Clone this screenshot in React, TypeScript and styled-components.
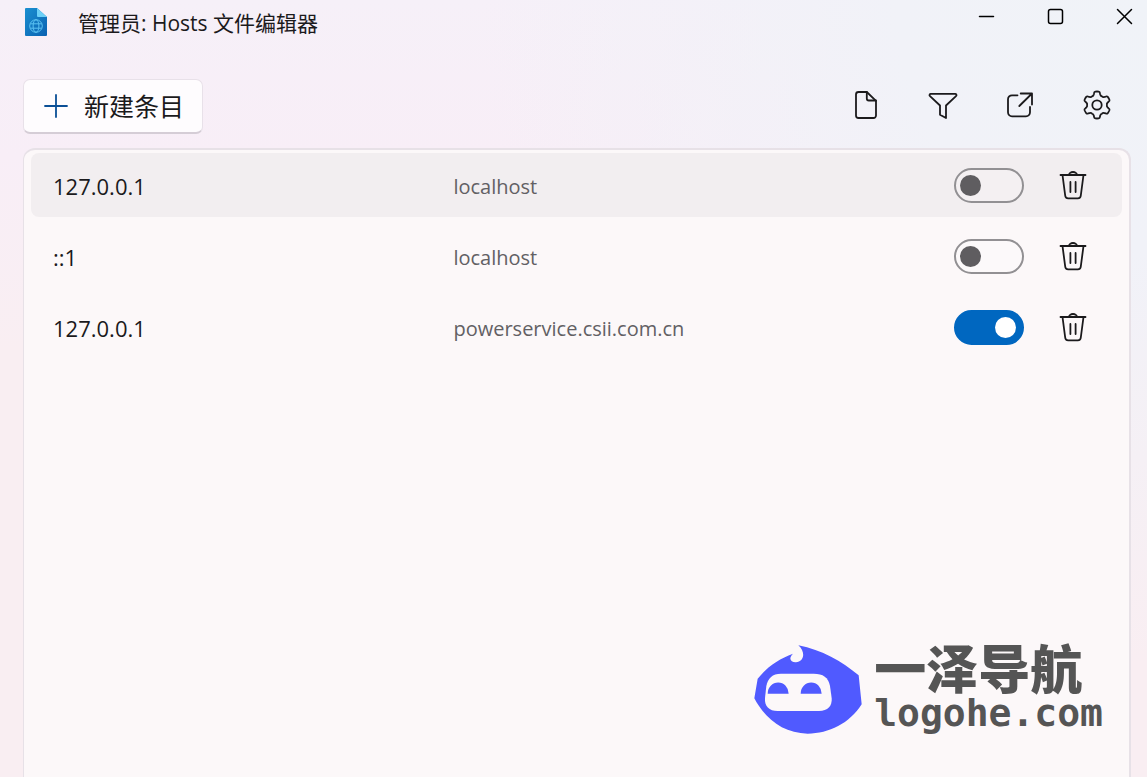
import React, { useState } from "react";
import styled, { createGlobalStyle } from "styled-components";

const GlobalStyle = createGlobalStyle`
  *, *::before, *::after { box-sizing: border-box; }
  body {
    margin: 0;
    font-family: "Open Sans", "Noto Sans CJK SC", sans-serif;
    color: #1b1a1c;
  }
  button, input { font: inherit; color: inherit; }
`;

const Window = styled.div`
  min-height: 100vh;
  display: flex;
  flex-direction: column;
  background:
    radial-gradient(circle at 100% 0%, #f0f3f8 0%, #f1f2f8 18%, rgba(241, 242, 248, 0) 48%),
    linear-gradient(180deg, #f6f0f8 0%, #f8eef7 20%, #f9eef2 45%, #f9eef2 100%);
`;

const TitleBar = styled.header`
  display: flex;
  align-items: flex-start;
  height: 46px;
  padding-left: 25px;
`;

const TitleGroup = styled.div`
  flex: 1;
  min-width: 0;
  display: flex;
  gap: 31px;
  padding-top: 8px;
`;

const Title = styled.h1`
  margin: 0;
  font-size: 21px;
  font-weight: 400;
  line-height: 30px;
  white-space: nowrap;
`;

const WindowControls = styled.div`
  display: flex;
  gap: 23px;
`;

const IconButton = styled.button<{ $width: number; $height: number }>`
  width: ${(p) => p.$width}px;
  height: ${(p) => p.$height}px;
  padding: 0;
  border: 0;
  border-radius: 6px;
  background: transparent;
  display: flex;
  align-items: center;
  justify-content: center;
  &:hover { background: rgba(0, 0, 0, 0.05); }
`;

const Toolbar = styled.div`
  display: flex;
  justify-content: space-between;
  align-items: flex-start;
  padding: 33px 20px 14px 23px;
`;

const NewEntryButton = styled.button`
  display: flex;
  align-items: center;
  gap: 16px;
  height: 55px;
  padding: 0 18px 0 20px;
  border: 1px solid #e8e1e9;
  border-bottom: 2px solid #d5cdd6;
  border-radius: 7px;
  background: #fefcfe;
  font-size: 25px;
  line-height: 36px;
  white-space: nowrap;
`;

const ToolbarActions = styled.div`
  display: flex;
  gap: 17px;
`;

const Panel = styled.main`
  flex: 1;
  display: flex;
  flex-direction: column;
  justify-content: space-between;
  margin: 0 16px 0 23px;
  padding: 3px 7px 40px;
  border: 2px solid #e7e1e7;
  border-width: 2px 2px 0 1px;
  border-radius: 12px 12px 0 0;
  background: #fcf8f9;
`;

const EntryList = styled.ul`
  list-style: none;
  margin: 0;
  padding: 0;
  display: flex;
  flex-direction: column;
  gap: 7px;
`;

const EntryRow = styled.li<{ $selected: boolean }>`
  display: grid;
  grid-template-columns: minmax(0, 4fr) minmax(0, 5fr) auto auto;
  align-items: center;
  height: 64px;
  padding: 0 22px;
  border-radius: 8px;
  background: ${(p) => (p.$selected ? "#f2eef0" : "transparent")};
`;

const Address = styled.span`
  padding-top: 2px;
  font-size: 22px;
  line-height: 32px;
`;

const Host = styled.span`
  padding-top: 4px;
  font-size: 20px;
  line-height: 32px;
  color: #626064;
`;

const Toggle = styled.input`
  appearance: none;
  display: flex;
  align-items: center;
  width: 70px;
  height: 35px;
  margin: 0 22px 0 0;
  padding: 0 6px 0 4px;
  border: 2px solid #929093;
  border-radius: 18px;
  background: rgba(255, 255, 255, 0.15);
  &::before {
    content: "";
    width: 21px;
    height: 21px;
    border-radius: 50%;
    background: #5f5d60;
  }
  &:checked {
    justify-content: flex-end;
    border-color: #0067c0;
    background: #0067c0;
  }
  &:checked::before { background: #fff; }
`;

const Brand = styled.a`
  align-self: flex-end;
  display: flex;
  align-items: flex-start;
  gap: 12px;
  margin-right: 19px;
  color: #555;
  text-decoration: none;
`;

const BrandText = styled.span`
  display: flex;
  flex-direction: column;
`;

const BrandName = styled.span`
  font-family: "Noto Sans CJK SC", sans-serif;
  font-size: 52px;
  font-weight: 900;
  line-height: 44px;
`;

const BrandDomain = styled.span`
  font-family: "DejaVu Sans Mono", monospace;
  font-size: 38px;
  font-weight: 700;
  line-height: 48px;
`;

type LineIconProps = { size?: number; color?: string; width?: number; children: React.ReactNode };

const LineIcon = ({ size = 32, color = "#1b1a1c", width = 1.8, children }: LineIconProps) => (
  <svg
    width={size}
    height={size}
    viewBox={`0 0 ${size} ${size}`}
    fill="none"
    stroke={color}
    strokeWidth={width}
    strokeLinecap="round"
    strokeLinejoin="round"
    aria-hidden="true"
  >
    {children}
  </svg>
);

const polar = (r: number, deg: number) => {
  const a = ((deg - 90) * Math.PI) / 180;
  return `${(16 + r * Math.cos(a)).toFixed(2)} ${(16 + r * Math.sin(a)).toFixed(2)}`;
};

// Six rounded teeth, joined by shallow curved valleys.
const gearPath =
  [0, 60, 120, 180, 240, 300]
    .map((a, i) => {
      const start = i === 0 ? `M${polar(12.2, a - 14)}` : "";
      return (
        `${start}Q${polar(13.5, a - 12)} ${polar(13.5, a - 7)}` +
        `Q${polar(13.6, a)} ${polar(13.5, a + 7)}` +
        `Q${polar(13.5, a + 12)} ${polar(12.2, a + 14)}` +
        `L${polar(11, a + 17)}Q${polar(9.6, a + 22)} ${polar(9.9, a + 30)}` +
        `Q${polar(9.6, a + 38)} ${polar(11, a + 43)}L${polar(12.2, a + 46)}`
      );
    })
    .join("") + "Z";

const AppIcon = () => (
  <svg width="22" height="28" viewBox="0 0 22 28" aria-hidden="true">
    <defs>
      <linearGradient id="sheet" x1="0" y1="0" x2="1" y2="1">
        <stop offset="0" stopColor="#1a8fd0" />
        <stop offset="1" stopColor="#0a62b2" />
      </linearGradient>
    </defs>
    <path d="M1 0h11l10 9v18a1 1 0 0 1-1 1H1a1 1 0 0 1-1-1V1a1 1 0 0 1 1-1z" fill="url(#sheet)" />
    <path d="M12 0l10 9h-9a1 1 0 0 1-1-1z" fill="#6cd0f7" />
    <g fill="none" stroke="#5cc3f2" strokeWidth="1">
      <circle cx="11" cy="18" r="6.3" />
      <ellipse cx="11" cy="18" rx="2.9" ry="6.3" />
      <path d="M5.3 15.8h11.4M5.3 20.2h11.4" />
    </g>
  </svg>
);

const BrandMark = () => (
  <svg width="108" height="89" viewBox="31 27 324 267" aria-hidden="true">
    <path
      d="M164 28C235 42 294 76 345 118L354 205C318 262 256 293 192 293C120 291 66 251 32 187L42 128C71 92 106 68 148 53C132 69 143 80 157 79C180 77 188 50 164 28Z"
      fill="#505aff"
    />
    <path
      d="M112 113H210C238 113 254 124 259 150L264 186C266 210 252 225 226 225H102C76 225 62 211 64 186L68 150C73 126 86 113 112 113Z"
      fill="#fcf8f9"
    />
    <path d="M72 173a31 33 0 0 1 63 0zM171 173a31 33 0 0 1 63 0z" fill="#505aff" />
  </svg>
);

const entries = [
  { id: 1, address: "127.0.0.1", host: "localhost", active: false },
  { id: 2, address: "::1", host: "localhost", active: false },
  { id: 3, address: "127.0.0.1", host: "powerservice.csii.com.cn", active: true },
];

const toolbarActions = [
  {
    label: "其他行",
    icon: (
      <>
        <path d="M8.5 3h8.3L26 11.8v14.7a2.5 2.5 0 0 1-2.5 2.5h-15A2.5 2.5 0 0 1 6 26.5v-21A2.5 2.5 0 0 1 8.5 3z" />
        <path d="M16.8 3v6.5a2 2 0 0 0 2 2H26" />
      </>
    ),
  },
  {
    label: "筛选器",
    icon: <path d="M4 4.8h24a1.3 1.3 0 0 1 1 2.3L19 16.5V29l-6-3.3V16.5L3 7.1a1.3 1.3 0 0 1 1-2.3z" />,
  },
  {
    label: "打开 hosts 文件",
    icon: (
      <>
        <path d="M13.5 6.3H8A4 4 0 0 0 4 10.3V23.3A4 4 0 0 0 8 27.3H22A4 4 0 0 0 26 23.3V18" />
        <path d="M16.7 4.5H28V15.5M28 4.5L15.3 17" />
      </>
    ),
  },
  {
    label: "设置",
    icon: (
      <>
        <path d={gearPath} />
        <circle cx="16" cy="16" r="4.7" />
      </>
    ),
  },
];

const windowActions = [
  { label: "最小化", icon: <path d="M1.5 8.5h14" /> },
  { label: "最大化", icon: <rect x="1.5" y="1.5" width="14" height="14" rx="2" /> },
  { label: "关闭", icon: <path d="M1.5 1.5l14 14M15.5 1.5l-14 14" /> },
];

export default function App() {
  const [active, setActive] = useState(() => entries.map((e) => e.active));

  return (
    <Window>
      <GlobalStyle />
      <TitleBar>
        <TitleGroup>
          <AppIcon />
          <Title>管理员: Hosts 文件编辑器</Title>
        </TitleGroup>
        <WindowControls>
          {windowActions.map((action) => (
            <IconButton key={action.label} aria-label={action.label} $width={46} $height={33}>
              <LineIcon size={17} width={1.5} color="#000">{action.icon}</LineIcon>
            </IconButton>
          ))}
        </WindowControls>
      </TitleBar>

      <Toolbar>
        <NewEntryButton>
          <LineIcon size={24} color="#0b4f96">
            <path d="M12 1v22M1 12h22" />
          </LineIcon>
          新建条目
        </NewEntryButton>
        <ToolbarActions>
          {toolbarActions.map((action) => (
            <IconButton key={action.label} aria-label={action.label} $width={60} $height={52}>
              <LineIcon>{action.icon}</LineIcon>
            </IconButton>
          ))}
        </ToolbarActions>
      </Toolbar>

      <Panel>
        <EntryList>
          {entries.map((entry, i) => (
            <EntryRow key={entry.id} $selected={i === 0}>
              <Address>{entry.address}</Address>
              <Host>{entry.host}</Host>
              <Toggle
                type="checkbox"
                role="switch"
                aria-label={`${entry.address} ${entry.host}`}
                checked={active[i]}
                onChange={() => setActive(active.map((v, n) => (n === i ? !v : v)))}
              />
              <IconButton aria-label="删除" $width={54} $height={52}>
                <LineIcon>
                  <path d="M3.5 6h25M12 6a4 3 0 0 1 8 0" />
                  <path d="M5.5 6L8.2 26.5a3 3 0 0 0 3 2.8h9.6a3 3 0 0 0 3-2.8L26.5 6" />
                  <path d="M13.4 13v10M18.6 13v10" />
                </LineIcon>
              </IconButton>
            </EntryRow>
          ))}
        </EntryList>
        <Brand href="#">
          <BrandMark />
          <BrandText>
            <BrandName>一泽导航</BrandName>
            <BrandDomain>logohe.com</BrandDomain>
          </BrandText>
        </Brand>
      </Panel>
    </Window>
  );
}
